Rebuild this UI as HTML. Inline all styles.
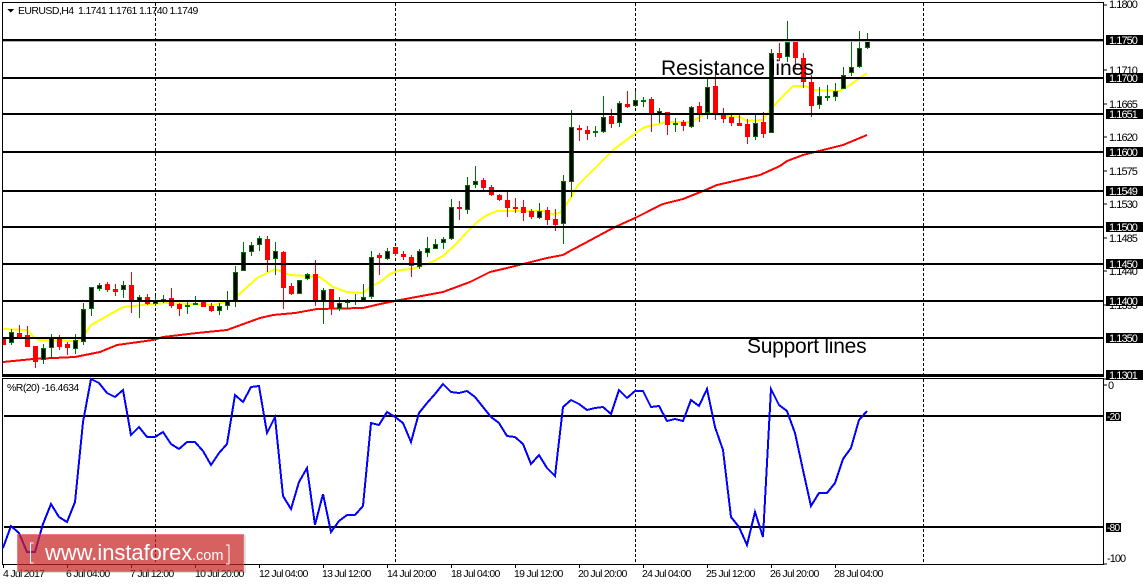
<!DOCTYPE html>
<html><head><meta charset="utf-8"><title>EURUSD,H4</title>
<style>
html,body{margin:0;padding:0;background:#fff;width:1143px;height:585px;overflow:hidden}
svg{display:block}
text{font-family:"Liberation Sans",sans-serif;font-size:11px;letter-spacing:-.95px;fill:#000}
.s{shape-rendering:crispEdges}
.w{fill:#fff}
.b{font-size:21px;letter-spacing:0}
.d{font-size:10.5px;letter-spacing:-.72px}
</style></head><body>
<svg width="1143" height="585" viewBox="0 0 1143 585" xmlns="http://www.w3.org/2000/svg">
<!-- dashed verticals -->
<path class="s" stroke="#000" stroke-width="1" stroke-dasharray="3 2" fill="none" d="M155.5 3V374M395.5 3V374M635.5 3V374M923.5 3V374M155.5 379V564M395.5 379V564M635.5 379V564M923.5 379V564"/>
<!-- moving averages -->
<polyline class="s" fill="none" stroke="#ffff00" stroke-width="2" points="3,329 27,330 35,338 39,340 77,341 83,337 91,325 107,316 123,307 153,304 167,303 213,305 233,300 257,278 275,269 290,275 307,276 320,277 333,287 347,292 363,293 370,287 380,282 390,274 400,270 412,269 430,263 443,256 457,243 467,232 477,222 487,215 497,211 543,211 552,214 560,213 570,199 578,185 613,150 637,132 645,127 655,125 667,122 690,122 700,117 708,113 727,116 740,117 747,121 763,120 770,110 782,97 793,86 805,86 815,90 840,91 850,85 867,73"/>
<polyline class="s" fill="none" stroke="#ff0000" stroke-width="2" points="3,362 33,359 75,357 100,352 117,345 153,340 163,337 197,333 227,330 260,318 273,315 295,313 317,309 363,308 380,304 400,300 443,292 470,282 490,272 507,268 523,264 547,258 563,255 570,251 587,242 600,235 613,228 635,218 647,212 663,204 683,199 703,191 717,185 760,175 780,166 787,161 803,155 843,145 867,135"/>
<!-- green wicks -->
<path class="s" stroke="#006e00" stroke-width="1" fill="none" d="M11.5 329V345M43.5 344V364M51.5 334V359M75.5 334V354M83.5 303V345M91.5 287V316M99.5 283V291M123.5 281V298M139.5 295V318M155.5 296V306M163.5 295V303M187.5 301V314M195.5 296V305M219.5 303V315M227.5 291V310M235.5 266V307M243.5 242V271M251.5 242V256M259.5 236V251M275.5 242V275M299.5 280V294M307.5 273V280M323.5 288V324M339.5 297V311M347.5 299V309M355.5 294V305M363.5 284V302M371.5 251V299M387.5 248V260M419.5 249V269M427.5 237V257M435.5 239V249M443.5 237V249M451.5 199V240M467.5 177V214M475.5 166V188M539.5 203V219M563.5 175V244M571.5 110V197M595.5 126V137M603.5 96V133M619.5 101V127M635.5 91V107M643.5 97V107M659.5 108V123M675.5 118V132M691.5 106V128M707.5 79V119M755.5 115V140M771.5 49V133M787.5 21V62M819.5 87V109M827.5 85V101M835.5 83V101M843.5 67V89M851.5 39V76M859.5 31V68M867.5 33V49"/>
<!-- green bodies -->
<path class="s" stroke="#006e00" stroke-width="1" fill="#000" d="M9.5 332.5h4v10h-4zM41.5 348.5h4v11h-4zM49.5 338.5h4v9h-4zM73.5 340.5h4v8h-4zM81.5 309.5h4v32h-4zM89.5 287.5h4v21h-4zM97.5 285.5h4v3h-4zM121.5 285.5h4v4h-4zM137.5 297.5h4v3h-4zM153.5 301.5h4v2h-4zM161.5 299.5h4v1h-4zM185.5 305.5h4v1h-4zM193.5 303.5h4v1h-4zM217.5 306.5h4v4h-4zM225.5 301.5h4v4h-4zM233.5 272.5h4v28h-4zM241.5 252.5h4v18h-4zM249.5 245.5h4v6h-4zM257.5 238.5h4v6h-4zM273.5 251.5h4v7h-4zM297.5 280.5h4v13h-4zM305.5 274.5h4v4h-4zM321.5 290.5h4v10h-4zM337.5 303.5h4v5h-4zM345.5 301.5h4v1h-4zM353.5 300.5h4v1h-4zM361.5 297.5h4v3h-4zM369.5 257.5h4v39h-4zM385.5 251.5h4v7h-4zM417.5 251.5h4v15h-4zM425.5 248.5h4v4h-4zM433.5 244.5h4v4h-4zM441.5 239.5h4v3h-4zM449.5 207.5h4v31h-4zM465.5 185.5h4v24h-4zM473.5 181.5h4v3h-4zM537.5 211.5h4v6h-4zM561.5 181.5h4v42h-4zM569.5 127.5h4v54h-4zM593.5 131.5h4v1h-4zM601.5 117.5h4v14h-4zM617.5 103.5h4v19h-4zM633.5 100.5h4v5h-4zM641.5 100.5h4v1h-4zM657.5 111.5h4v2h-4zM673.5 123.5h4v1h-4zM689.5 107.5h4v19h-4zM705.5 87.5h4v25h-4zM753.5 123.5h4v13h-4zM769.5 53.5h4v79h-4zM785.5 42.5h4v14h-4zM817.5 96.5h4v8h-4zM825.5 96.5h4v1h-4zM833.5 91.5h4v5h-4zM841.5 75.5h4v13h-4zM849.5 67.5h4v5h-4zM857.5 48.5h4v18h-4zM865.5 41.5h4v6h-4z"/>
<!-- red wicks -->
<path class="s" stroke="#ff0000" stroke-width="1" fill="none" d="M19.5 325V338M27.5 326V347M35.5 346V368M59.5 335V350M67.5 342V355M107.5 282V292M115.5 284V296M131.5 272V313M147.5 294V305M171.5 288V308M179.5 303V316M203.5 302V307M211.5 303V312M267.5 236V272M283.5 251V309M291.5 283V295M315.5 260V306M331.5 289V315M379.5 253V275M395.5 247V256M403.5 251V260M411.5 255V277M459.5 201V220M483.5 178V190M491.5 185V196M499.5 194V201M507.5 192V217M515.5 198V213M523.5 200V221M531.5 209V219M547.5 207V225M555.5 209V231M579.5 125V141M587.5 126V140M611.5 109V128M627.5 91V108M651.5 97V132M667.5 112V135M683.5 120V131M699.5 102V122M715.5 71V120M723.5 108V123M731.5 115V126M739.5 113V126M747.5 119V144M763.5 112V138M779.5 43V61M795.5 42V69M803.5 53V88M811.5 75V117"/>
<!-- red bodies -->
<path class="s" fill="#ff0000" d="M3 337h3v8h-3zM17 333h5v5h-5zM25 335h5v12h-5zM33 346h5v16h-5zM57 338h5v9h-5zM65 344h5v4h-5zM105 284h5v6h-5zM113 289h5v3h-5zM129 285h5v17h-5zM145 297h5v7h-5zM169 298h5v8h-5zM177 304h5v5h-5zM201 302h5v5h-5zM209 306h5v5h-5zM265 239h5v21h-5zM281 252h5v36h-5zM289 286h5v8h-5zM313 274h5v27h-5zM329 289h5v20h-5zM377 255h5v3h-5zM393 247h5v7h-5zM401 254h5v3h-5zM409 257h5v9h-5zM457 207h5v2h-5zM481 180h5v8h-5zM489 187h5v8h-5zM497 195h5v5h-5zM505 200h5v8h-5zM513 207h5v2h-5zM521 207h5v6h-5zM529 211h5v6h-5zM545 210h5v10h-5zM553 219h5v6h-5zM577 128h5v2h-5zM585 130h5v4h-5zM609 116h5v8h-5zM625 104h5v3h-5zM649 99h5v16h-5zM665 112h5v13h-5zM681 122h5v4h-5zM697 106h5v8h-5zM713 86h5v29h-5zM721 113h5v6h-5zM729 117h5v6h-5zM737 123h5v3h-5zM745 124h5v13h-5zM761 122h5v12h-5zM777 53h5v5h-5zM793 42h5v16h-5zM801 58h5v24h-5zM809 82h5v24h-5z"/>
<!-- horizontal lines -->
<g class="s" fill="#000">
<rect x="3" y="41" width="1100" height="1" fill="#b0b0b0"/>
<rect x="3" y="39" width="1100" height="2"/>
<rect x="3" y="77" width="1100" height="2"/>
<rect x="3" y="113" width="1100" height="2"/>
<rect x="3" y="151" width="1100" height="2"/>
<rect x="3" y="190" width="1100" height="2"/>
<rect x="3" y="226" width="1100" height="2"/>
<rect x="3" y="263" width="1100" height="2"/>
<rect x="3" y="300" width="1100" height="2"/>
<rect x="3" y="337" width="1100" height="2"/>
<rect x="3" y="374" width="1100" height="3"/>
<rect x="4" y="415" width="1100" height="2"/>
<rect x="4" y="526" width="1100" height="2"/>
<!-- frame -->
<rect x="2" y="2" width="1102" height="1"/>
<rect x="2" y="2" width="1" height="375"/>
<rect x="1103" y="2" width="1" height="375"/>
<rect x="2" y="378" width="1102" height="1"/>
<rect x="2" y="378" width="1" height="187"/>
<rect x="1103" y="378" width="1" height="187"/>
<rect x="2" y="564" width="1102" height="1"/>
</g>
<!-- %R line -->
<polyline class="s" fill="none" stroke="#0000ff" stroke-width="2" points="3,548 11,526 19,533 27,552 35,552 43,524 51,504 59,517 67,522 75,502 83,422 91,379 99,383 107,393 115,397 123,390 131,435 139,427 147,437 155,437 163,432 171,444 179,449 187,442 195,442 203,451 211,465 219,453 227,444 235,395 243,402 251,387 259,386 267,433 275,417 283,496 291,509 299,482 307,468 315,525 323,494 331,532 339,521 347,515 355,515 363,506 371,423 379,425 387,412 395,417 403,423 411,442 419,413 427,403 435,394 443,384 451,392 459,393 467,391 475,397 483,407 491,417 499,423 507,436 515,437 523,444 531,464 539,455 547,468 555,476 563,407 571,400 579,404 587,410 595,408 603,407 611,414 619,390 627,398 635,391 643,391 651,407 659,406 667,421 675,419 683,421 691,400 699,406 707,389 715,427 723,450 731,517 739,527 747,545 755,512 763,537 771,389 779,405 787,411 795,433 803,470 811,506 819,493 827,493 835,483 843,459 851,448 859,420 867,411"/>
<!-- ticks -->
<path class="s" stroke="#000" stroke-width="1" fill="none" d="M1104 5h3M1104 70h3M1104 104h3M1104 137h3M1104 171h3M1104 204h3M1104 238h3M1104 271h3M1104 305h3M1104 379h3M1104 385h3M1104 564h3M3.5 565v3M67.5 565v3M131.5 565v3M195.5 565v3M259.5 565v3M323.5 565v3M387.5 565v3M451.5 565v3M515.5 565v3M579.5 565v3M643.5 565v3M707.5 565v3M771.5 565v3M835.5 565v3"/>
<!-- axis labels -->
<text x="1109" y="8">1.1800</text>
<text x="1109" y="74">1.1710</text>
<text x="1109" y="108">1.1665</text>
<text x="1109" y="141">1.1620</text>
<text x="1109" y="175">1.1575</text>
<text x="1109" y="208">1.1530</text>
<text x="1109" y="242">1.1485</text>
<text x="1109" y="275">1.1440</text>
<text x="1109" y="309">1.1395</text>
<text x="1108" y="389">0</text>
<text x="1107" y="562">-100</text>
<g class="s" fill="#000">
<rect x="1106" y="35" width="37" height="10"/>
<rect x="1106" y="73" width="37" height="10"/>
<rect x="1106" y="109" width="37" height="10"/>
<rect x="1106" y="147" width="37" height="10"/>
<rect x="1106" y="186" width="37" height="10"/>
<rect x="1106" y="222" width="37" height="10"/>
<rect x="1106" y="259" width="37" height="10"/>
<rect x="1106" y="296" width="37" height="10"/>
<rect x="1106" y="333" width="37" height="10"/>
<rect x="1106" y="370" width="37" height="10"/>
<rect x="1106" y="412" width="15" height="9"/>
<rect x="1106" y="523" width="15" height="9"/>
</g>
<g>
<text class="w" x="1109" y="44">1.1750</text>
<text class="w" x="1109" y="82">1.1700</text>
<text class="w" x="1109" y="118">1.1651</text>
<text class="w" x="1109" y="156">1.1600</text>
<text class="w" x="1109" y="195">1.1549</text>
<text class="w" x="1109" y="231">1.1500</text>
<text class="w" x="1109" y="268">1.1450</text>
<text class="w" x="1109" y="305">1.1400</text>
<text class="w" x="1109" y="342">1.1350</text>
<text class="w" x="1109" y="379">1.1301</text>
<text class="w" x="1107" y="420" style="font-size:10px;letter-spacing:-.7px">-20</text>
<text class="w" x="1107" y="531" style="font-size:10px;letter-spacing:-.7px">-80</text>
</g>
<!-- date labels -->
<text class="d" x="3" y="577">4 Jul 2017</text>
<text class="d" x="66" y="577">6 Jul 04:00</text>
<text class="d" x="130" y="577">7 Jul 12:00</text>
<text class="d" x="195" y="577">10 Jul 20:00</text>
<text class="d" x="259" y="577">12 Jul 04:00</text>
<text class="d" x="322" y="577">13 Jul 12:00</text>
<text class="d" x="387" y="577">14 Jul 20:00</text>
<text class="d" x="451" y="577">18 Jul 04:00</text>
<text class="d" x="514" y="577">19 Jul 12:00</text>
<text class="d" x="578" y="577">20 Jul 20:00</text>
<text class="d" x="642" y="577">24 Jul 04:00</text>
<text class="d" x="706" y="577">25 Jul 12:00</text>
<text class="d" x="770" y="577">26 Jul 20:00</text>
<text class="d" x="834" y="577">28 Jul 04:00</text>
<!-- header -->
<path class="s" fill="#000" d="M7 9h7l-3.5 3.500z"/>
<text x="18" y="14" style="font-size:10.5px;letter-spacing:-.58px">EURUSD,H4</text>
<text x="78" y="14" style="font-size:10.5px;letter-spacing:-.65px">1.1741 1.1761 1.1740 1.1749</text>
<text x="7" y="391" style="font-size:10.5px;letter-spacing:-.55px">%R(20) -16.4634</text>
<!-- annotations -->
<text class="b" x="661" y="75">Resistance lines</text>
<text class="b" x="747" y="353" style="letter-spacing:-.25px">Support lines</text>
<!-- watermark -->
<rect x="18" y="535" width="228" height="38" fill="#000" opacity=".12"/>
<rect class="s" x="17" y="534" width="227" height="38" fill="#d32323" fill-opacity=".68"/>
<rect class="s" x="17.500" y="534.500" width="226" height="37" fill="none" stroke="#fff" stroke-opacity=".15"/>
<path class="s" fill="none" stroke="#fff" stroke-width="1.300" d="M33.500 543h-3v20h3M226 545h3v19h-3"/>
<text x="45" y="560" style="font-size:22px;letter-spacing:-.05px;fill:#fff">www.instaforex</text>
<text x="192" y="560" style="font-size:14.500px;letter-spacing:0;fill:#fff">.com</text>
</svg>
</body></html>
